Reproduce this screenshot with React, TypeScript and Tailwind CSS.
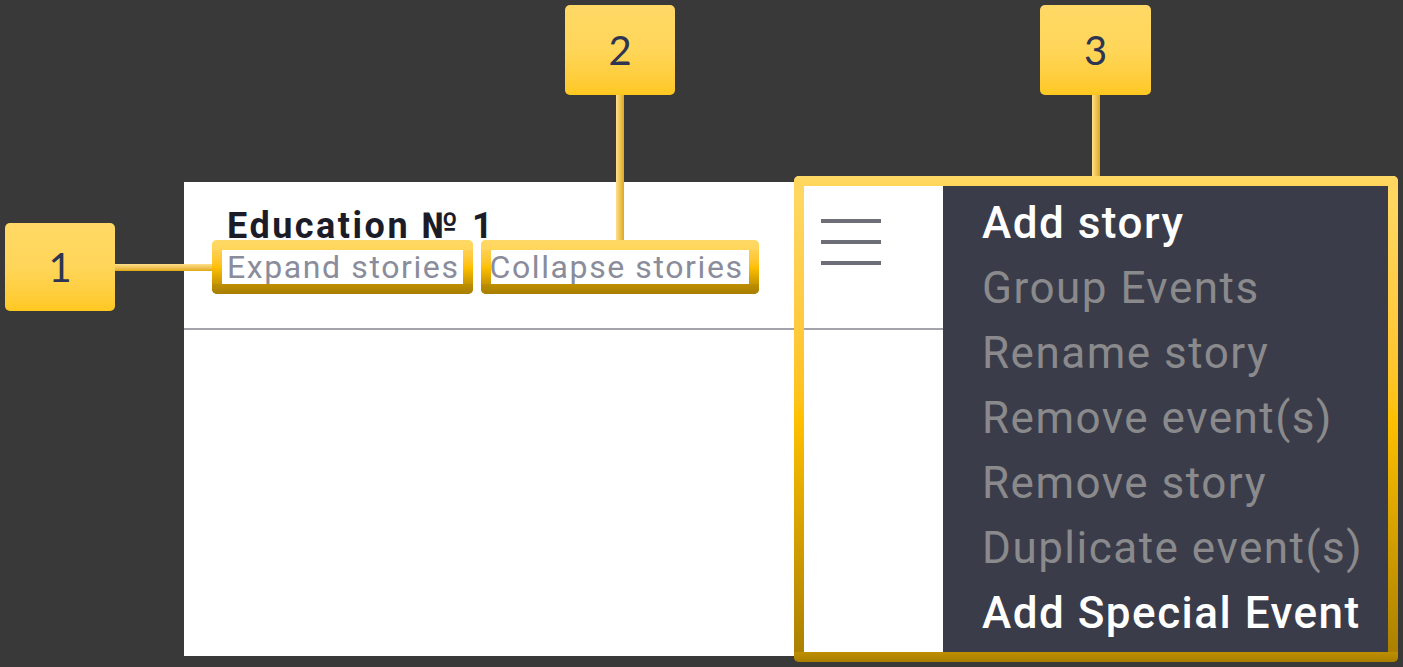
import React from "react";

function Frame({ className }: { className: string }) {
  return (
    <div className={`absolute rounded-[5px] overflow-hidden ${className}`}>
      <div className="absolute left-0 top-0 bottom-0 w-[10px] bg-gradient-to-b from-[#FFD966] via-[#FFC000] to-[#A87E00]" />
      <div className="absolute right-0 top-0 bottom-0 w-[10px] bg-gradient-to-b from-[#FFD966] via-[#FFC000] to-[#A87E00]" />
      <div className="absolute left-0 right-0 top-0 h-[10px] bg-gradient-to-b from-[#FFD966] to-[#FFD65A]" />
      <div className="absolute left-0 right-0 bottom-0 h-[10px] bg-gradient-to-b from-[#BE8F00] to-[#A87E00]" />
    </div>
  );
}

function Callout({ n, className }: { n: string; className: string }) {
  return (
    <div
      className={`absolute rounded-[5px] bg-gradient-to-b from-[#FFD966] via-[#FFD659] to-[#FFC81F] flex items-center justify-center text-[#2E3552] text-[40px] font-['Lato',sans-serif] ${className}`}
    >
      {n}
    </div>
  );
}

export default function App() {
  const disabled = ["Group Events", "Rename story", "Remove event(s)", "Remove story", "Duplicate event(s)"];
  return (
    <div className="relative w-[1403px] h-[667px] bg-[#393939] overflow-hidden pt-[182px] pl-[184px] flex font-['Roboto',sans-serif]">
      <div className="w-[759px] h-[474px] bg-white flex flex-col">
        <div className="h-[148px] border-b-2 border-[#a3a3ab] flex justify-between">
          <div className="pl-[43px] pt-[24px]">
            <div className="text-[36px] leading-[40px] font-bold tracking-[2.5px] text-[#1c1c28]">Education № 1</div>
            <div className="mt-[3px] flex text-[32px] leading-[36px] tracking-[1.6px] text-[#8a8c9c]">
              <span>Expand stories</span>
              <span className="ml-[30px]">Collapse stories</span>
            </div>
          </div>
          <div className="pr-[62px] pt-[37px] flex flex-col gap-[17px]">
            <div className="w-[60px] h-[4px] bg-[#6e6e78]" />
            <div className="w-[60px] h-[4px] bg-[#6e6e78]" />
            <div className="w-[60px] h-[4px] bg-[#6e6e78]" />
          </div>
        </div>
      </div>
      <div className="w-[452px] h-[474px] bg-[#3b3c4a] pl-[39px] pt-[9px] text-[44px] leading-[65px] tracking-[1.5px]">
        <div className="text-white font-medium">Add story</div>
        {disabled.map((t) => (
          <div key={t} className="text-[#8a8a8c]">
            {t}
          </div>
        ))}
        <div className="text-white font-medium">Add Special Event</div>
      </div>

      {/* annotations */}
      <div className="absolute left-[115px] top-[264px] w-[97px] h-[7px] bg-gradient-to-b from-[#FFE08A] to-[#E0A800]" />
      <div className="absolute left-[616px] top-[95px] w-[8px] h-[145px] bg-gradient-to-r from-[#FFE08A] to-[#E0A800]" />
      <div className="absolute left-[1092px] top-[95px] w-[8px] h-[82px] bg-gradient-to-r from-[#FFE08A] to-[#E0A800]" />

      <Frame className="left-[212px] top-[240px] w-[261px] h-[54px]" />
      <Frame className="left-[481px] top-[240px] w-[278px] h-[54px]" />
      <Frame className="left-[794px] top-[176px] w-[604px] h-[486px]" />

      <Callout n="1" className="left-[5px] top-[223px] w-[110px] h-[88px]" />
      <Callout n="2" className="left-[565px] top-[5px] w-[110px] h-[90px]" />
      <Callout n="3" className="left-[1040px] top-[5px] w-[111px] h-[90px]" />
    </div>
  );
}
